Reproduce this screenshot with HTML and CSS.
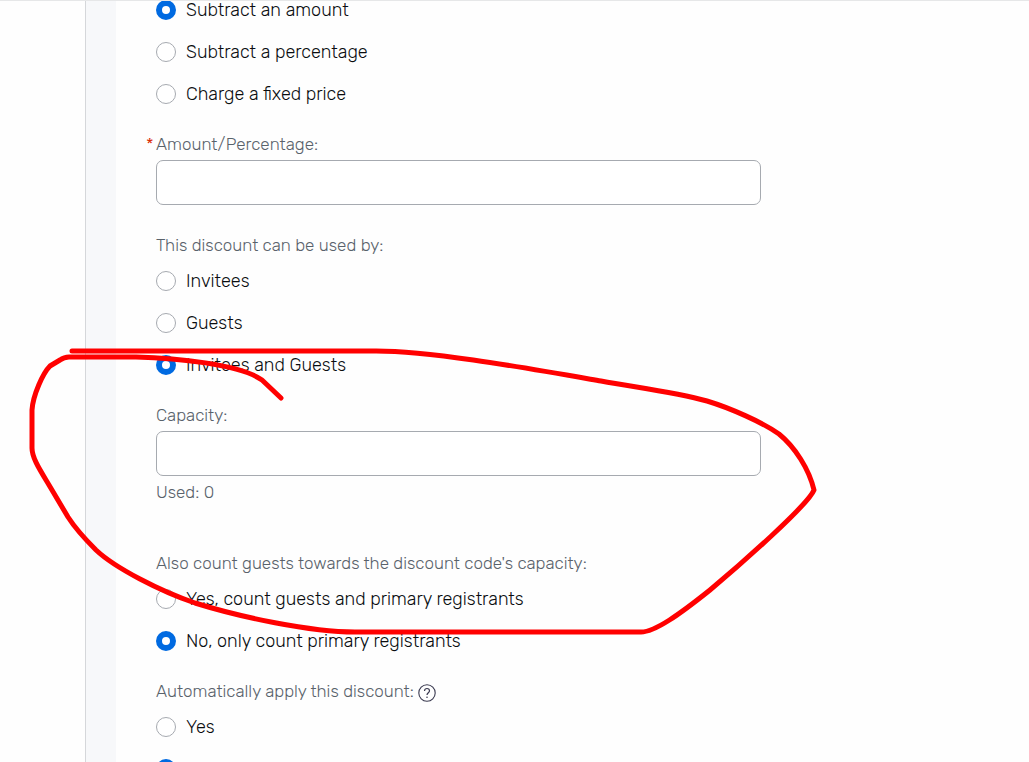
FILE: index.html
```html
<!DOCTYPE html>
<html lang="en">
<head>
  <meta charset="UTF-8">
  <title>Discount Code</title>
  <link rel="stylesheet" href="styles.css">
</head>
<body>

  <div class="page">
    <div class="panel">
      <form class="discount-form">
        <fieldset class="field" aria-label="Discount type">
          <div class="options">
            <label class="option"><input type="radio" name="type" checked> Subtract an amount</label>
            <label class="option"><input type="radio" name="type"> Subtract a percentage</label>
            <label class="option"><input type="radio" name="type"> Charge a fixed price</label>
          </div>
        </fieldset>

        <div class="field">
          <label class="field-label" for="amount"><span class="required">*</span>Amount/Percentage:</label>
          <input class="text-input" type="text" id="amount" required>
        </div>

        <fieldset class="field">
          <legend class="field-label">This discount can be used by:</legend>
          <div class="options">
            <label class="option"><input type="radio" name="usedBy"> Invitees</label>
            <label class="option"><input type="radio" name="usedBy"> Guests</label>
            <label class="option"><input type="radio" name="usedBy" checked> Invitees and Guests</label>
          </div>
        </fieldset>

        <div class="field has-hint">
          <label class="field-label" for="capacity">Capacity:</label>
          <input class="text-input" type="text" id="capacity">
          <div class="hint">Used: 0</div>
        </div>

        <fieldset class="field">
          <legend class="field-label">Also count guests towards the discount code's capacity:</legend>
          <div class="options">
            <label class="option"><input type="radio" name="countGuests"> Yes, count guests and primary registrants</label>
            <label class="option"><input type="radio" name="countGuests" checked> No, only count primary registrants</label>
          </div>
        </fieldset>

        <fieldset class="field">
          <legend class="field-label">Automatically apply this discount:
            <button class="help" type="button" aria-label="Help">
              <svg width="18" height="18" viewBox="0 0 18 18" fill="none" stroke="#3a3a50">
                <circle cx="9" cy="9" r="8.2" stroke-width="1.1"/>
                <path d="M6.5 7.1C6.5 5.4 7.6 4.5 9 4.5s2.5.9 2.5 2.3c0 1.9-2.5 2-2.5 4.2" stroke-width="1.2"/>
                <circle cx="9" cy="13.2" r=".8" fill="#3a3a50" stroke="none"/>
              </svg>
            </button>
          </legend>
          <div class="options">
            <label class="option"><input type="radio" name="autoApply"> Yes</label>
            <label class="option"><input type="radio" name="autoApply" aria-label="No" checked></label>
          </div>
        </fieldset>
      </form>
    </div>

    <!-- Hand-drawn marker around the capacity settings -->
    <svg class="marker" width="1029" height="762" viewBox="0 0 1029 762" aria-hidden="true">
      <path d="M72 351H376C430 351 520 367 601 381C640 388 675 392 707 401C730 408 762 422 779 434C795 447 809 469 814 490C808 505 740 565 710 590C680 614 655 632 641 632H355C310 632 240 617 195 603C160 591 115 568 96 550C84 538 75 528 68 517L49 485C40 470 32 458 32 448V410C33 395 43 373 50 366L60 360Q64 357 69 357H136C175 358 240 364 262 380L281 398"/>
    </svg>
  </div>

</body>
</html>
```
FILE: styles.css
```css
* {
  box-sizing: border-box;
}

body {
  margin: 0;
  font-family: Rubik, Roboto, sans-serif;
  font-size: 18px;
  font-weight: 300;
  line-height: 20px;
  color: #0a0d10;
  background: #fefefe;
}

.page {
  position: relative;
  height: 100vh;
  overflow: hidden;
  padding-left: 85px;
}

/* top divider, runs over the panel */
.page::before {
  content: "";
  position: absolute;
  top: 0;
  left: 0;
  right: 0;
  height: 1px;
  background: #e6e7e8;
}

.panel {
  border-left: 1px solid #d5d7da;
  padding-left: 30px;
  background: linear-gradient(to right, #f7f8fa 30px, transparent 30px);
}

.discount-form {
  display: flex;
  flex-direction: column;
  gap: 29px;
  padding: 0 40px;
}

.field {
  min-width: 0;
  margin: 0;
  padding: 0;
  border: 0;
}

.has-hint {
  margin-bottom: 20px;
}

.field-label,
.hint {
  font-size: 17px;
  line-height: 22px;
  color: #59626b;
}

.field-label {
  display: block;
  padding: 0;
}

legend.field-label {
  margin-bottom: 15px;
}

.required {
  display: inline-block;
  width: 10px;
  margin-left: -10px;
  color: #d92b04;
}

.text-input {
  display: block;
  width: 100%;
  max-width: 605px;
  height: 45px;
  margin-top: 5px;
  padding: 0 12px;
  border: 1px solid #a6aab0;
  border-radius: 7px;
  background: #fff;
  font: inherit;
}

.hint {
  margin-top: 5px;
}

.options {
  display: flex;
  flex-direction: column;
  gap: 22px;
}

.option {
  display: flex;
  align-items: center;
  gap: 10px;
}

.option input {
  appearance: none;
  width: 20px;
  height: 20px;
  margin: 0;
  border: 1px solid #a6aab0;
  border-radius: 50%;
  background: #fff;
}

.option input:checked {
  border: 6px solid #006ae1;
}

.help {
  padding: 0;
  border: 0;
  background: none;
  vertical-align: middle;
  cursor: pointer;
}

.help svg {
  display: block;
}

.marker {
  position: absolute;
  top: 0;
  left: 0;
  fill: none;
  stroke: #ff0000;
  stroke-width: 5;
  stroke-linecap: round;
  stroke-linejoin: round;
  pointer-events: none;
}
```
